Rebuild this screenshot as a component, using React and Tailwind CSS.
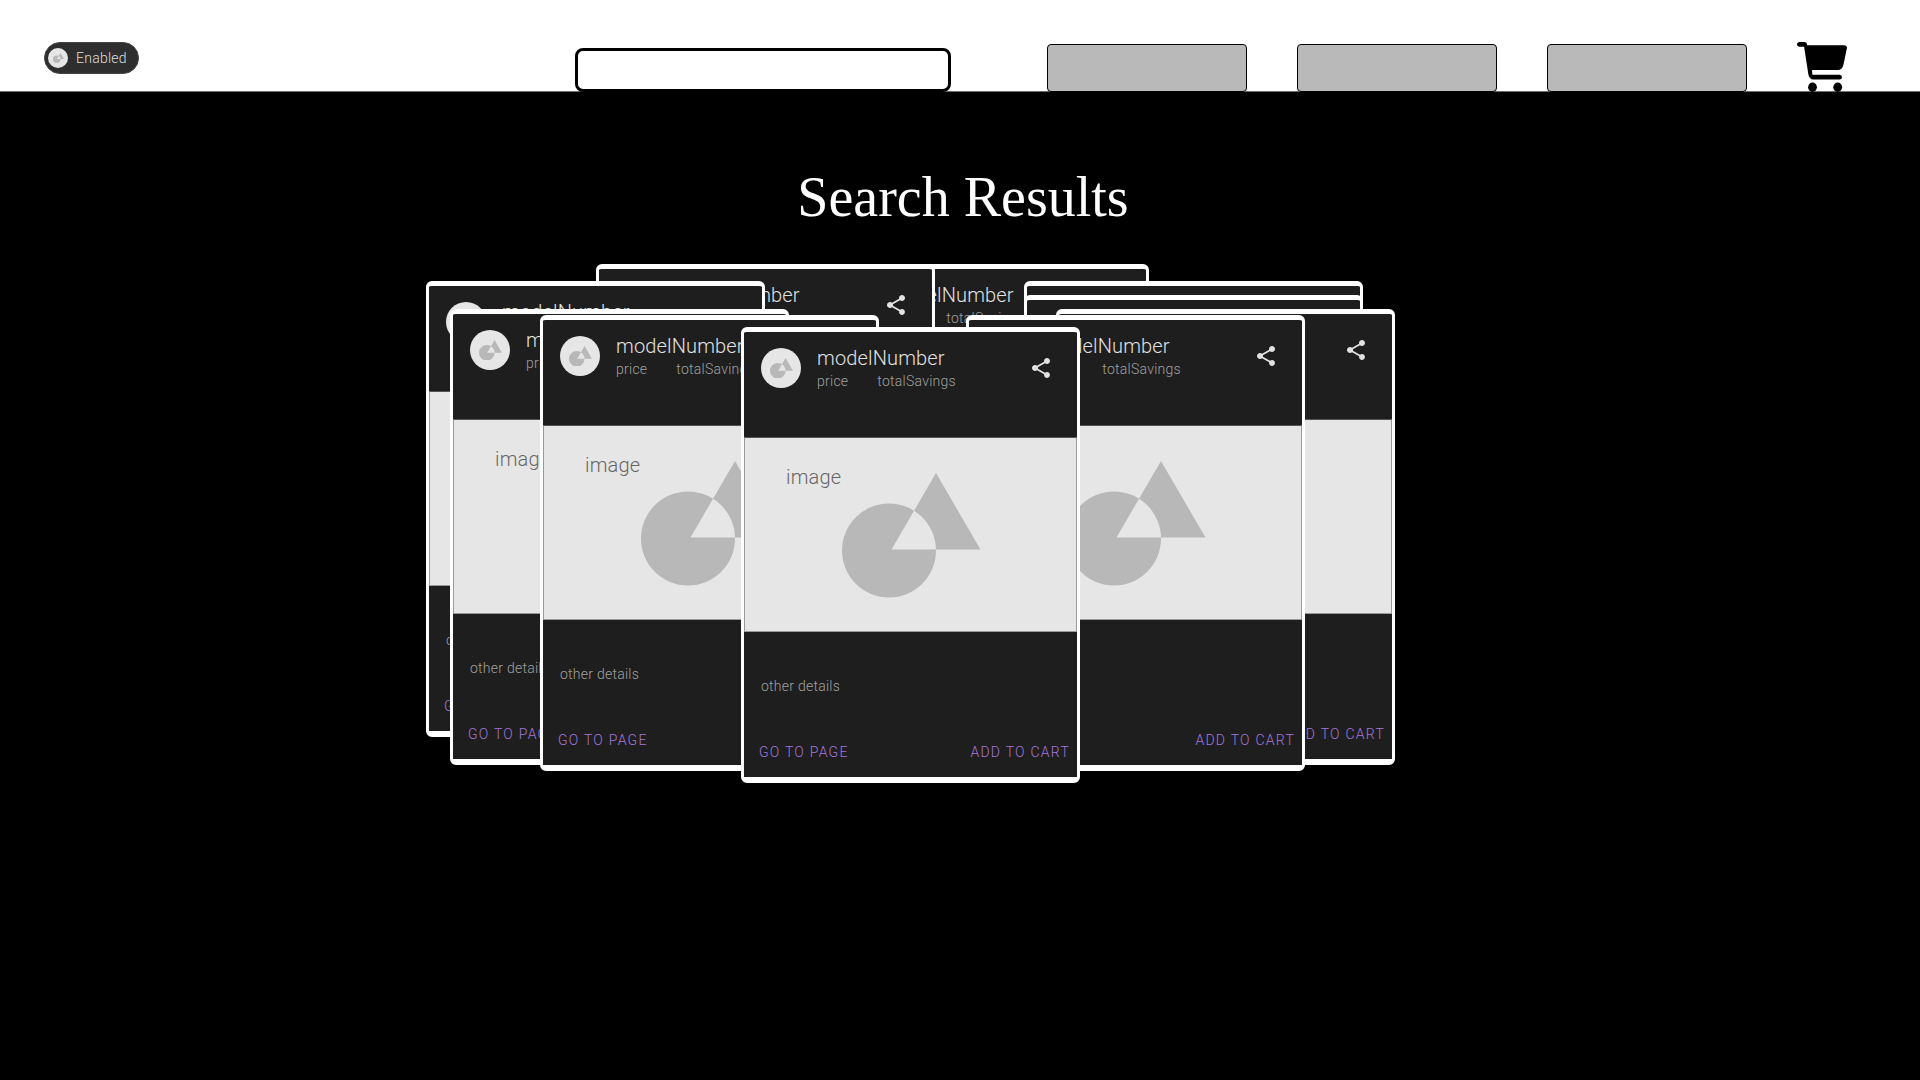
import { MdShare } from "react-icons/md";

const cards = [
  { id: 1, place: "left-[384px] top-0" },
  { id: 2, place: "left-[170px] top-0" },
  { id: 3, place: "left-0 top-[17px]" },
  { id: 4, place: "left-[598px] top-[17px]" },
  { id: 5, place: "left-[598px] top-[31px]" },
  { id: 6, place: "left-[630px] top-[45px]" },
  { id: 7, place: "left-[24px] top-[45px]" },
  { id: 8, place: "left-[114px] top-[51px]" },
  { id: 9, place: "left-[540px] top-[51px]" },
  { id: 10, place: "left-[315px] top-[63px]" },
];

function Shapes({ className }) {
  return (
    <svg viewBox="0 0 139 125" className={className} fill="#b8b8b8" aria-hidden="true">
      <path
        fillRule="evenodd"
        d="M0 77.5a47 47 0 1 0 94 0a47 47 0 1 0 -94 0ZM94 0L138.500 76.500H49.500Z"
      />
    </svg>
  );
}

function CartIcon() {
  return (
    <svg viewBox="0 0 50 50" className="block size-[50px]" aria-hidden="true">
      <path
        d="M2.200 0H7.500Q9.600 0 10 2.300L10.200 3.200H47.500Q50.400 3.400 49.900 6.300L46.500 22.500Q45.300 28 40.500 28H15L15.400 32.800H42.600Q45 33 45 35.200Q45 37.600 42.600 37.600H16.500Q12 37.400 11.300 32L7.100 4.700H2.200Q0 4.500 0 2.300Q0 0.200 2.200 0Z"
      />
      <ellipse cx="15.500" cy="45.300" rx="4.400" ry="4.700" />
      <ellipse cx="40.700" cy="45.300" rx="4.400" ry="4.700" />
    </svg>
  );
}

function ProductCard({ place }) {
  return (
    <article
      className={`absolute w-[339px] rounded-md border-x-[3px] border-t-[5px] border-b-[6px] border-white bg-[#1e1e1e] font-light ${place}`}
    >
      <header className="flex h-[105px] items-start pt-4 pr-6 pl-[17px]">
        <div className="flex size-10 items-center justify-center rounded-full bg-[#e6e6e6]">
          <Shapes className="w-[23px]" />
        </div>
        <div className="-mt-0.5 ml-4 flex-1">
          <h2 className="text-xl leading-6 tracking-[0.15px] text-[#e0e0e0]">modelNumber</h2>
          <p className="flex gap-[29px] text-sm leading-[22px] tracking-[0.25px] text-[#a0a0a0]">
            <span>price</span>
            <span>totalSavings</span>
          </p>
        </div>
        <button type="button" aria-label="Share" className="mt-2 text-[#e2e2e2]">
          <MdShare className="size-6" />
        </button>
      </header>
      <div className="relative flex h-[195px] border border-[#999] border-t-[#555] bg-[#e6e6e6]">
        <span className="mt-[27px] ml-[41px] text-xl leading-6 tracking-[0.15px] text-[#666]">image</span>
        <Shapes className="absolute top-[35px] left-[97px] w-[139px]" />
      </div>
      <p className="mt-11 pl-[17px] text-sm leading-5 tracking-[0.25px] text-[#a0a0a0]">other details</p>
      <div className="mt-[46px] flex justify-between pr-[7px] pb-[15px] pl-[15px] text-sm leading-5 tracking-[1.25px] text-[#a476dc]">
        <button type="button">GO TO PAGE</button>
        <button type="button">ADD TO CART</button>
      </div>
    </article>
  );
}

export default function App() {
  return (
    <div className="min-h-screen bg-black font-[Roboto,sans-serif]">
      <header className="flex h-[92px] items-end border-b border-[#6b726e] bg-white pr-[73px] pl-11">
        <button
          type="button"
          className="mr-auto mb-[17px] flex h-8 w-[95px] items-center gap-2 rounded-full border border-[#444] bg-[#2e2e2e] pl-[3px] text-sm font-light tracking-[0.25px] text-[#dedede]"
        >
          <span className="flex size-5 items-center justify-center rounded-full bg-[#e6e6e6]">
            <Shapes className="w-[11px]" />
          </span>
          Enabled
        </button>
        <input
          type="search"
          aria-label="Search"
          className="mr-24 -mb-px h-11 w-[376px] rounded-lg border-[3px] border-black bg-white px-3"
        />
        <nav className="-mb-px flex items-end gap-[50px]">
          <button type="button" aria-label="Menu 1" className="h-12 w-[200px] rounded border border-black bg-[#b9b9b9]" />
          <button type="button" aria-label="Menu 2" className="h-12 w-[200px] rounded border border-black bg-[#b9b9b9]" />
          <button type="button" aria-label="Menu 3" className="h-12 w-[200px] rounded border border-black bg-[#b9b9b9]" />
          <button type="button" aria-label="Cart">
            <CartIcon />
          </button>
        </nav>
      </header>
      <main>
        <h1 className="pt-[73px] pl-1.5 text-center font-['Liberation_Serif',serif] text-[56px] leading-[64px] text-white">
          Search Results
        </h1>
        <section aria-label="Products" className="relative mx-auto mt-[35px] h-[519px] w-[1068px]">
          {cards.map((card) => (
            <ProductCard key={card.id} place={card.place} />
          ))}
        </section>
      </main>
    </div>
  );
}
